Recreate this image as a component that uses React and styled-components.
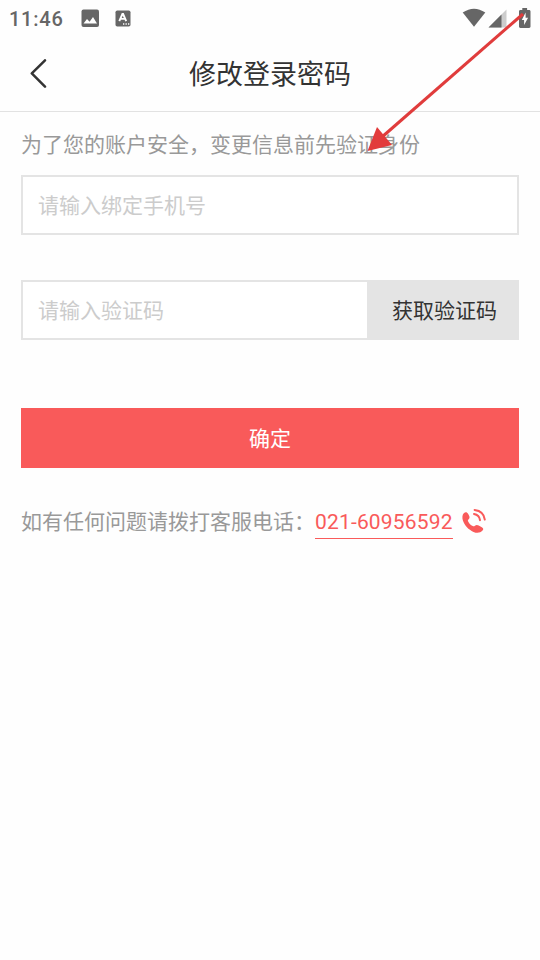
import React from 'react';
import styled, { createGlobalStyle } from 'styled-components';

const GlobalStyle = createGlobalStyle`
  * { box-sizing: border-box; }
  body {
    margin: 0;
    background: #fefefe;
    font-family: Roboto, "Noto Sans CJK SC", sans-serif;
    font-weight: 400;
  }
  input, button { font: inherit; border-radius: 0; }
`;

const Screen = styled.div`
  position: relative;
  width: 540px;
  height: 960px;
  overflow: hidden;
  background: #fefefe;
`;

const StatusBar = styled.div`
  height: 36px;
  padding: 0 8px 0 9px;
  display: flex;
  align-items: center;
  justify-content: space-between;
  color: #666;
`;

const StatusGroup = styled.div`
  display: flex;
  align-items: center;
`;

const Clock = styled.span`
  width: 72px;
  font-size: 20px;
  font-weight: 480;
  line-height: 36px;
  letter-spacing: 0.75px;
  padding-top: 1px;
`;

const StatusIcon = styled.svg`
  display: block;
  flex: none;
  margin-left: ${(p) => p.$gap || 0}px;
`;

const Header = styled.header`
  height: 76px;
  border-bottom: 1px solid #e2e2e2;
  display: grid;
  grid-template-columns: 78px 1fr 78px;
  align-items: center;
`;

const BackButton = styled.button`
  width: 78px;
  height: 75px;
  padding: 0 0 0 30px;
  border: 0;
  background: none;
  display: flex;
  align-items: center;
`;

const Title = styled.h1`
  margin: 0;
  padding-top: 3px;
  text-align: center;
  font-size: 27px;
  line-height: 40px;
  font-weight: 400;
  color: #333;
`;

const Content = styled.main`
  padding: 17px 21px 0;
  font-size: 21px;
`;

const Hint = styled.p`
  margin: 0 0 14px;
  line-height: 32px;
  color: #999;
`;

const Field = styled.div`
  display: flex;
  height: 60px;
  border: 2px solid #e4e4e4;
  background: #fff;
  margin-bottom: ${(p) => p.$after}px;
`;

const TextInput = styled.input`
  flex: 1;
  min-width: 0;
  border: 0;
  outline: 0;
  padding: 2px 15px 0;
  background: transparent;
  color: #333;
  &::placeholder { color: #ccc; opacity: 1; }
`;

const CodeButton = styled.button`
  width: 150px;
  padding: 0 0 2px 5px;
  border: 0;
  background: #e4e4e4;
  color: #333;
`;

const SubmitButton = styled.button`
  display: block;
  width: 100%;
  height: 60px;
  padding: 0 0 2px;
  border: 0;
  background: #f95a5a;
  color: #fff;
`;

const Support = styled.div`
  margin-top: 37px;
  height: 34px;
  display: flex;
  align-items: flex-start;
  line-height: 34px;
  color: #999;
`;

const Phone = styled.a`
  height: 34px;
  border-bottom: 1px solid #f95a5a;
  color: #f95a5a;
  text-decoration: none;
  letter-spacing: 0.17px;
`;

const PhoneIcon = styled.svg`
  display: block;
  margin: 3px 0 0 8px;
`;

const Pointer = styled.svg`
  position: absolute;
  top: 0;
  left: 0;
  pointer-events: none;
`;

export default function App() {
  return (
    <Screen>
      <GlobalStyle />
      <StatusBar>
        <StatusGroup>
          <Clock>11:46</Clock>
          <StatusIcon width="18" height="18" viewBox="0 0 18 18">
            <rect x="0.5" y="0.5" width="17.5" height="17.5" rx="2" fill="#666" />
            <path d="M2.500 14.500 6 10l2.600 2.700L12 8l4 6.500z" fill="#fff" />
          </StatusIcon>
          <StatusIcon $gap={16} width="16" height="17" viewBox="0 0 16 17">
            <rect x="0.500" y="0.500" width="15" height="16" rx="1.800" fill="#666" />
            <path d="M4.300 11.200 7.400 4h.7l3.100 7.200M5.500 8.900H10" fill="none" stroke="#fff" strokeWidth="1.900" />
            <path d="M8 14h1.300M10.500 14h1.300M13 14h1.300" stroke="#fff" strokeWidth="1.300" />
          </StatusIcon>
        </StatusGroup>
        <StatusGroup>
          <StatusIcon width="24" height="20" viewBox="0 0 24 20">
            <path d="M0.700 4.600Q12-3.200 23.300 4.600L12 18.800z" fill="#666" />
          </StatusIcon>
          <StatusIcon $gap={2} width="19" height="19" viewBox="0 0 19 19">
            <path d="M18.500.5v18H.5z" fill="#ccc" />
            <path d="M13.500 5.500v13H.5z" fill="#666" />
          </StatusIcon>
          <StatusIcon $gap={11} width="14" height="21" viewBox="0 0 14 21">
            <path d="M4.300 0h4.800v2h2c.8 0 1.400.6 1.400 1.400v15.200c0 .8-.6 1.400-1.400 1.400H2.400c-.8 0-1.400-.6-1.400-1.400V3.400C1 2.600 1.600 2 2.400 2h1.900z" fill="#666" />
            <path d="M7.600 4.500 3.800 12h2.300v5l4-7.300H7.600z" fill="#fff" />
          </StatusIcon>
        </StatusGroup>
      </StatusBar>
      <Header>
        <BackButton aria-label="返回">
          <svg width="18" height="30" viewBox="0 0 18 30">
            <path d="M15 1.300 1.800 14.400 15 27.700" fill="none" stroke="#333" strokeWidth="2.500" strokeLinecap="round" strokeLinejoin="round" />
          </svg>
        </BackButton>
        <Title>修改登录密码</Title>
      </Header>
      <Content>
        <Hint>为了您的账户安全，变更信息前先验证身份</Hint>
        <Field $after={45}>
          <TextInput placeholder="请输入绑定手机号" />
        </Field>
        <Field $after={68}>
          <TextInput placeholder="请输入验证码" />
          <CodeButton>获取验证码</CodeButton>
        </Field>
        <SubmitButton>确定</SubmitButton>
        <Support>
          <span>如有任何问题请拨打客服电话：</span>
          <Phone href="tel:021-60956592">021-60956592</Phone>
          <PhoneIcon width="27" height="27" viewBox="0 0 27 27">
            <path d="M2.800 5.200C4.500 3.700 6 4 7.200 5.900l.8 1.500c1 1.800.6 2.900-.6 4-.7.700-.6 1.300-.2 2.100 1 2 2.400 3.500 4.500 4.600.8.400 1.500.4 2.200-.3 1.100-1.100 2.300-1.200 3.800-.4l3.100 1.800c1.600 1 1.900 2.100.7 3.400-2.200 2.300-5.300 2.900-9 1.300C7.600 21.800 3.500 17.700 1.900 12.600 1 9.500 1.300 6.700 2.800 5.200z" fill="#f95a5a" />
            <path d="M13 6c3.500.6 5.600 2.700 6 6.200M13.600 1.900c5.800.7 9.600 4.200 10.200 9.700" fill="none" stroke="#f95a5a" strokeWidth="2" strokeLinecap="round" />
          </PhoneIcon>
        </Support>
      </Content>
      <Pointer width="540" height="160" viewBox="0 0 540 160">
        <path d="M523 14 382 137" stroke="#e03c3c" strokeWidth="3" />
        <path d="M367.500 151 377 127 392 145z" fill="#e23b3b" />
      </Pointer>
    </Screen>
  );
}
